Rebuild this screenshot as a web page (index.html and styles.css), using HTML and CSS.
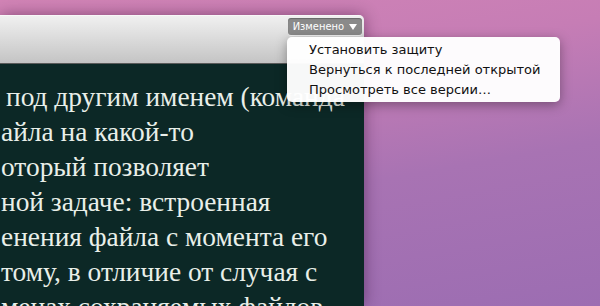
FILE: index.html
```html
<!DOCTYPE html>
<html lang="ru">
<head>
    <meta charset="UTF-8">
    <title>Изменено</title>
    <link rel="stylesheet" href="styles.css">
</head>
<body>

    <!-- Document window -->
    <div class="window">
        <div class="titlebar">
            <div class="badge">
                Изменено
                <svg class="arrow" width="8" height="6" viewBox="0 0 8 6"><path d="M0 0 L8 0 L4 6 Z" fill="#fff"/></svg>
            </div>
        </div>
        <div class="content">
            <div class="line first">под другим именем (команда</div>
            <div class="line">айла на какой-то</div>
            <div class="line">оторый позволяет</div>
            <div class="line">ной задаче: встроенная</div>
            <div class="line">енения файла с момента его</div>
            <div class="line">тому, в отличие от случая с</div>
            <div class="line">менах сохраняемых файлов</div>
        </div>
    </div>

    <!-- Version menu -->
    <ul class="menu">
        <li>Установить защиту</li>
        <li>Вернуться к последней открытой</li>
        <li>Просмотреть все версии…</li>
    </ul>

</body>
</html>
```

FILE: styles.css
```css
/* General */
body {
    margin: 0;
    width: 600px;
    height: 306px;
    overflow: hidden;
    background: linear-gradient(170deg, #d284b6 0%, #c67db5 30%, #a873b3 60%, #9c6db2 100%);
    font-family: 'DejaVu Sans', sans-serif;
}

/* Window */
.window {
    width: 364px;
    height: 291px;
    margin-top: 15px;
    border-top-right-radius: 5px;
    overflow: hidden;
    box-shadow: 0 0 16px rgba(40, 0, 40, 0.45);
}

.titlebar {
    height: 49px;
    box-sizing: border-box;
    padding: 2px 2px 0 0;
    display: flex;
    justify-content: flex-end;
    align-items: flex-start;
    background: linear-gradient(#f0f0f0, #d6d6d6 60%, #c4c4c4);
    border-top: 1px solid #f8f8f8;
    border-bottom: 1px solid #5a5a5a;
}

.badge {
    display: flex;
    align-items: center;
    gap: 5px;
    height: 17px;
    padding: 0 5px 0 5px;
    border-radius: 3px;
    background: #8a8a8a;
    color: #fff;
    font-family: 'DejaVu Sans Condensed', 'DejaVu Sans', sans-serif;
    font-size: 11px;
    box-shadow: inset 0 1px 1px rgba(0, 0, 0, 0.25), 0 1px 0 rgba(255, 255, 255, 0.6);
}

.content {
    height: 242px;
    padding-top: 16px;
    overflow: hidden;
    background: #0c2826;
    color: #e9efe9;
    font-family: 'Liberation Serif', serif;
    font-size: 27.4px;
    line-height: 35px;
    white-space: nowrap;
}

.line {
    padding-left: 1px;
}

.line.first {
    padding-left: 6px;
}

/* Menu */
.menu {
    position: absolute;
    left: 287px;
    top: 37px;
    width: 273px;
    height: 65px;
    box-sizing: border-box;
    margin: 0;
    padding: 3px 0 0 22px;
    list-style: none;
    background: rgba(255, 255, 255, 0.97);
    border-radius: 5px;
    box-shadow: 0 3px 12px rgba(0, 0, 0, 0.35);
    font-size: 13px;
    line-height: 20px;
    color: #111;
}
```
